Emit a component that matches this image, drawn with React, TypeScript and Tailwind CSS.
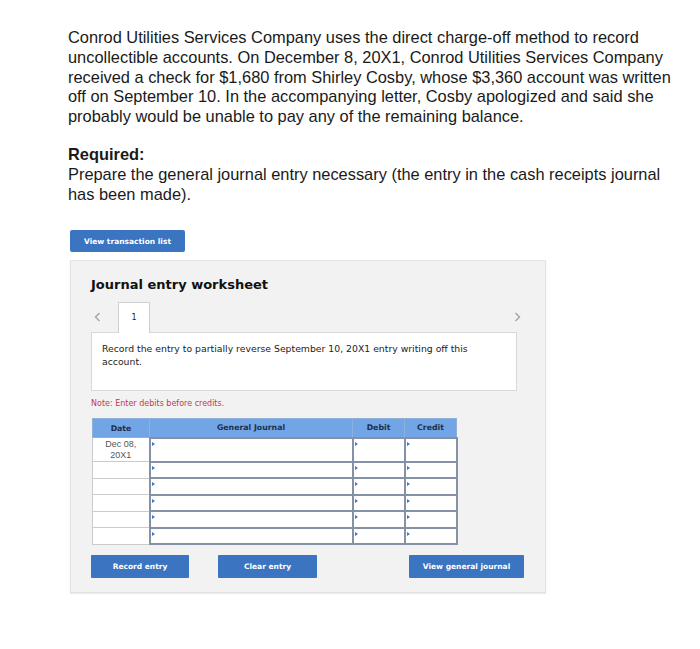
import React from "react";

const dv = { fontFamily: '"DejaVu Sans", Verdana, sans-serif' };

function Marker() {
  return (
    <span className="absolute left-[1px] top-[3px] w-0 h-0 border-t-[2px] border-b-[2px] border-l-[3px] border-t-transparent border-b-transparent border-l-[#3d78c8]" />
  );
}

function InputCell({ w, h }: { w: string; h: string }) {
  return (
    <td className={`relative ${w} ${h} border-2 border-[#8592a6] bg-white p-0`}>
      <Marker />
    </td>
  );
}

function Chevron({ dir }: { dir: "left" | "right" }) {
  return (
    <svg width="7" height="10" viewBox="0 0 7 10" className="block">
      <path
        d={dir === "left" ? "M5.5 1 L1.5 5 L5.5 9" : "M1.5 1 L5.5 5 L1.5 9"}
        fill="none"
        stroke="#a3a3a3"
        strokeWidth="1.4"
      />
    </svg>
  );
}

export default function App() {
  const rows = [0, 1, 2, 3, 4, 5];
  return (
    <div className="w-[700px] h-[649px] bg-white overflow-hidden pt-[28px] pl-[68px]">
      <div
        className="text-[16.4px] leading-[19.8px] text-[#1a1a1a] whitespace-nowrap"
        style={{ fontFamily: '"Liberation Sans", Arial, sans-serif' }}
      >
        <p>
          Conrod Utilities Services Company uses the direct charge-off method to record
          <br />
          uncollectible accounts. On December 8, 20X1, Conrod Utilities Services Company
          <br />
          received a check for $1,680 from Shirley Cosby, whose $3,360 account was written
          <br />
          off on September 10. In the accompanying letter, Cosby apologized and said she
          <br />
          probably would be unable to pay any of the remaining balance.
        </p>
        <p className="mt-[18px] font-bold">Required:</p>
        <p>
          Prepare the general journal entry necessary (the entry in the cash receipts journal
          <br />
          has been made).
        </p>
      </div>

      <div className="mt-[26px] ml-[2px]" style={dv}>
        <button className="block h-[22px] w-[115px] rounded-[2px] bg-[#3b74c0] text-white text-[7.5px] font-bold">
          View transaction list
        </button>

        <div className="mt-[8px] w-[476px] h-[333px] bg-[#f2f2f2] border border-[#e2e2e2] shadow-[0_1px_1px_rgba(0,0,0,0.08)] pl-[20px] pt-[16px]">
          <h2 className="text-[13px] font-bold text-[#111] leading-[16px]">Journal entry worksheet</h2>

          <div className="mt-[8px] flex items-center h-[31px] w-[430px]">
            <div className="w-[27px] pl-[3px]">
              <Chevron dir="left" />
            </div>
            <div className="self-end w-[32px] h-[31px] bg-white border border-b-0 border-[#cfcfcf] flex items-center justify-center text-[8px] text-[#222] relative z-10 -mb-px">
              1
            </div>
            <div className="flex-1" />
            <Chevron dir="right" />
          </div>

          <div className="w-[426px] h-[59px] bg-white border border-[#d9d9d9] px-[10px] pt-[9px] text-[9.3px] leading-[13px] text-[#222]">
            Record the entry to partially reverse September 10, 20X1 entry writing off this
            <br />
            account.
          </div>

          <p className="mt-[8px] text-[8px] text-[#c7374a] leading-[10px]">Note: Enter debits before credits.</p>

          <table className="mt-[9px] ml-[1px] border-collapse">
            <thead>
              <tr className="bg-[#72a5e5] text-[7.8px] font-bold text-[#1e2f4a]">
                <th className="w-[57px] h-[19px] p-0 border border-[#8fb0d8] font-bold">Date</th>
                <th className="w-[203px] h-[19px] p-0 border border-[#8fb0d8] font-bold">General Journal</th>
                <th className="w-[52px] h-[19px] p-0 border border-[#8fb0d8] font-bold">Debit</th>
                <th className="w-[52px] h-[19px] p-0 border border-[#8fb0d8] font-bold">Credit</th>
              </tr>
            </thead>
            <tbody>
              {rows.map((r) => {
                const h = r === 0 ? "h-[23px]" : "h-[16.5px]";
                return (
                  <tr key={r}>
                    <td
                      className={`w-[57px] ${h} border border-[#cbcbcb] bg-white text-center align-top text-[9px] leading-[11px] text-[#555] p-0 pt-[1px]`}
                      style={{ fontFamily: '"Liberation Sans", Arial, sans-serif' }}
                    >
                      {r === 0 ? (
                        <>
                          Dec 08,
                          <br />
                          20X1
                        </>
                      ) : null}
                    </td>
                    <InputCell w="w-[203px]" h={h} />
                    <InputCell w="w-[52px]" h={h} />
                    <InputCell w="w-[52px]" h={h} />
                  </tr>
                );
              })}
            </tbody>
          </table>

          <div className="mt-[10px] flex items-center">
            <button className="h-[23px] w-[98px] rounded-[1px] bg-[#3b74c0] text-white text-[7.5px] font-bold">
              Record entry
            </button>
            <button className="ml-[29px] h-[23px] w-[99px] rounded-[1px] bg-[#3b74c0] text-white text-[7.5px] font-bold">
              Clear entry
            </button>
            <button className="ml-[92px] h-[23px] w-[115px] rounded-[1px] bg-[#3b74c0] text-white text-[7.5px] font-bold">
              View general journal
            </button>
          </div>
        </div>
      </div>
    </div>
  );
}
